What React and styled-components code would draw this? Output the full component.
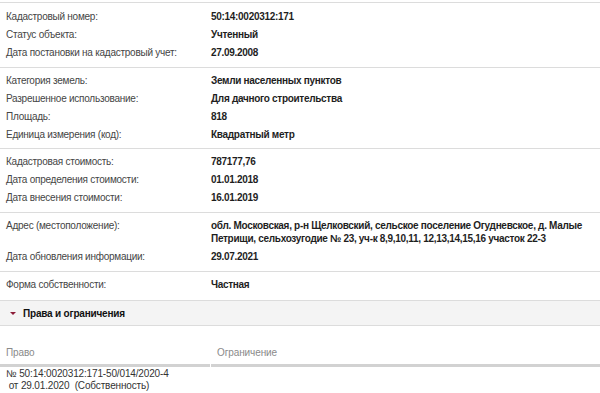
import React from "react";
import styled, { createGlobalStyle } from "styled-components";

const Global = createGlobalStyle`
  html, body { margin: 0; padding: 0; background: #fff; }
  body { font-family: "Liberation Sans", Arial, sans-serif; font-size: 10px; }
`;

const Page = styled.div`
  padding-top: 2px;
  width: 600px;
`;

const Group = styled.div`
  border-top: 1px solid #dcdcdc;
  padding: ${(p) => p.$pt ?? 4}px 0 ${(p) => p.$pb ?? 5}px;
`;

const Row = styled.div`
  display: grid;
  grid-template-columns: 205px 1fr;
  padding: 3px 8px 3px 6px;
  line-height: ${(p) => (p.$multi ? 12.5 : 12)}px;
  font-size: 10px;
`;

const Label = styled.div`
  color: #454545;
  letter-spacing: -0.25px;
`;

const Value = styled.div`
  color: #1e1e1e;
  font-weight: bold;
  letter-spacing: -0.3px;
`;

const SectionHeader = styled.div`
  display: flex;
  align-items: center;
  gap: 7px;
  height: 24px;
  padding-left: 10px;
  background: #f4f4f4;
  border-top: 1px solid #dcdcdc;
  border-bottom: 1px solid #dcdcdc;
  font-weight: bold;
  color: #111;
  font-size: 10px;
  letter-spacing: -0.2px;
`;

const Caret = styled.span`
  width: 0;
  height: 0;
  border-left: 3px solid transparent;
  border-right: 3px solid transparent;
  border-top: 3px solid #8c1c38;
  margin-top: 1px;
`;

const Table = styled.div`
  display: grid;
  grid-template-columns: 210px 1fr;
  column-gap: 1px;
  padding-top: 21px;
`;

const HeadCell = styled.div`
  color: #8a8a8a;
  line-height: 12px;
  padding: 0 6px 5px;
  border-bottom: 3px solid #d2d2d2;
  letter-spacing: -0.1px;
`;

const Cell = styled.div`
  color: #333;
  line-height: 12px;
  padding: 1px 6px;
  white-space: pre;
  letter-spacing: -0.15px;
`;

const groups = [
  {
    pt: 5,
    rows: [
      ["Кадастровый номер:", "50:14:0020312:171"],
      ["Статус объекта:", "Учтенный"],
      ["Дата постановки на кадастровый учет:", "27.09.2008"],
    ],
  },
  {
    pb: 4,
    rows: [
      ["Категория земель:", "Земли населенных пунктов"],
      ["Разрешенное использование:", "Для дачного строительства"],
      ["Площадь:", "818"],
      ["Единица измерения (код):", "Квадратный метр"],
    ],
  },
  {
    rows: [
      ["Кадастровая стоимость:", "787177,76"],
      ["Дата определения стоимости:", "01.01.2018"],
      ["Дата внесения стоимости:", "16.01.2019"],
    ],
  },
  {
    rows: [
      [
        "Адрес (местоположение):",
        "обл. Московская, р-н Щелковский, сельское поселение Огудневское, д. Малые Петрищи, сельхозугодие № 23, уч-к 8,9,10,11, 12,13,14,15,16 участок 22-3",
        true,
      ],
      ["Дата обновления информации:", "29.07.2021"],
    ],
  },
  { pb: 6, rows: [["Форма собственности:", "Частная"]] },
];

export default function App() {
  return (
    <Page>
      <Global />
      {groups.map((g, i) => (
        <Group key={i} $pt={g.pt} $pb={g.pb}>
          {g.rows.map(([l, v, multi]) => (
            <Row key={l} $multi={multi}>
              <Label>{l}</Label>
              <Value>{v}</Value>
            </Row>
          ))}
        </Group>
      ))}
      <SectionHeader>
        <Caret />
        Права и ограничения
      </SectionHeader>
      <Table>
        <HeadCell>Право</HeadCell>
        <HeadCell>Ограничение</HeadCell>
        <Cell>{"№ 50:14:0020312:171-50/014/2020-4\n от 29.01.2020  (Собственность)"}</Cell>
        <Cell></Cell>
      </Table>
    </Page>
  );
}
